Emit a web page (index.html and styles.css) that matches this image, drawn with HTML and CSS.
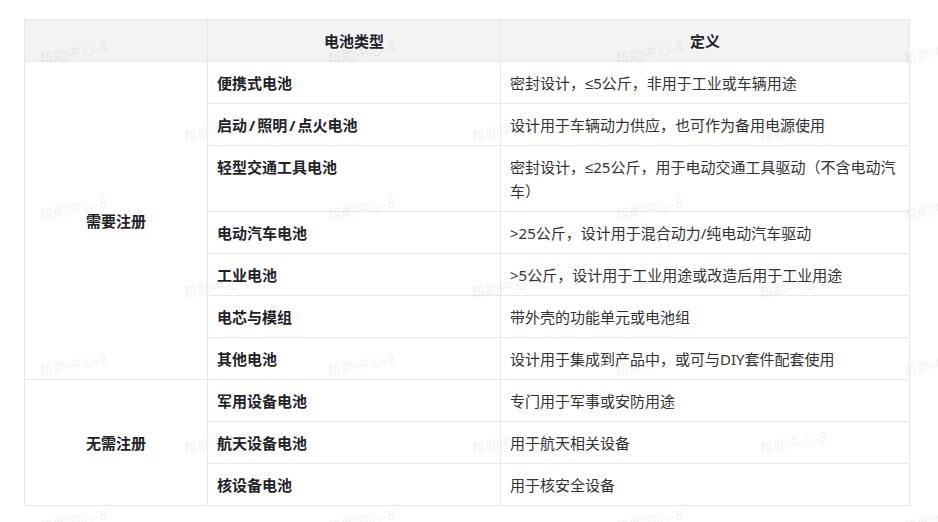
FILE: index.html
```html
<!DOCTYPE html>
<html lang="zh-CN">
<head>
<meta charset="utf-8">
<title>电池类型</title>
<link rel="stylesheet" href="styles.css">
</head>
<body>
<div class="page">
  <table class="battery-table">
    <colgroup>
      <col class="c1"><col class="c2"><col class="c3">
    </colgroup>
    <thead>
      <tr><th></th><th>电池类型</th><th>定义</th></tr>
    </thead>
    <tbody>
      <tr><td class="group" rowspan="7">需要注册</td><td class="type">便携式电池</td><td>密封设计，<span class="sym">≤</span>5公斤，非用于工业或车辆用途</td></tr>
      <tr><td class="type">启动<span class="slash">/</span>照明<span class="slash">/</span>点火电池</td><td>设计用于车辆动力供应，也可作为备用电源使用</td></tr>
      <tr><td class="type">轻型交通工具电池</td><td>密封设计，<span class="sym">≤</span>25公斤，用于电动交通工具驱动（不含电动汽车）</td></tr>
      <tr><td class="type">电动汽车电池</td><td>&gt;25公斤，设计用于混合动力/纯电动汽车驱动</td></tr>
      <tr><td class="type">工业电池</td><td>&gt;5公斤，设计用于工业用途或改造后用于工业用途</td></tr>
      <tr><td class="type">电芯与模组</td><td>带外壳的功能单元或电池组</td></tr>
      <tr><td class="type">其他电池</td><td>设计用于集成到产品中，或可与DIY套件配套使用</td></tr>
      <tr><td class="group" rowspan="3">无需注册</td><td class="type">军用设备电池</td><td>专门用于军事或安防用途</td></tr>
      <tr><td class="type">航天设备电池</td><td>用于航天相关设备</td></tr>
      <tr><td class="type">核设备电池</td><td>用于核安全设备</td></tr>
    </tbody>
  </table>
  <div class="wm-layer wm-a" aria-hidden="true">
    <span>帮助中心-8</span><span>帮助中心-8</span><span>帮助中心-8</span><span>帮助中心-8</span>
    <span>帮助中心-8</span><span>帮助中心-8</span><span>帮助中心-8</span><span>帮助中心-8</span>
    <span>帮助中心-8</span><span>帮助中心-8</span><span>帮助中心-8</span><span>帮助中心-8</span>
    <span>帮助中心-8</span><span>帮助中心-8</span><span>帮助中心-8</span><span>帮助中心-8</span>
  </div>
  <div class="wm-layer wm-b" aria-hidden="true">
    <span>帮助中心-8</span><span>帮助中心-8</span><span>帮助中心-8</span><span>帮助中心-8</span>
    <span>帮助中心-8</span><span>帮助中心-8</span><span>帮助中心-8</span><span>帮助中心-8</span>
    <span>帮助中心-8</span><span>帮助中心-8</span><span>帮助中心-8</span><span>帮助中心-8</span>
  </div>
</div>
</body>
</html>
```

FILE: styles.css
```css
html, body {
  margin: 0;
  padding: 0;
  background: #ffffff;
}

body {
  font-family: "Noto Sans", "Noto Sans CJK SC", sans-serif;
  color: #333333;
}

.page {
  position: relative;
  width: 938px;
  height: 522px;
  overflow: hidden;
  padding: 19px 0 0 24px;
  box-sizing: border-box;
}

.battery-table {
  border-collapse: collapse;
  table-layout: fixed;
  width: 885px;
  font-size: 15px;
  line-height: 24px;
}

.c1 { width: 183px; }
.c2 { width: 293px; }
.c3 { width: 409px; }

.battery-table th,
.battery-table td {
  border: 1px solid #e6e7ea;
  padding: 9px 9px 8px 9px;
  text-align: left;
  vertical-align: top;
}

.battery-table th {
  background: #f2f3f5;
  text-align: center;
  font-weight: 700;
  color: #1f2329;
}

.battery-table td {
  font-weight: 400;
  color: #333333;
}

.battery-table td.type {
  font-weight: 700;
  color: #1f2329;
}

.sym {
  font-family: "Liberation Sans", "DejaVu Sans", sans-serif;
  line-height: 1;
}

.slash {
  padding: 0 2px;
}

.battery-table td.group {
  text-align: center;
  vertical-align: middle;
  font-weight: 700;
  color: #1f2329;
}

.wm-layer {
  position: absolute;
  display: grid;
  grid-template-columns: repeat(4, 288px);
  grid-auto-rows: 156px;
  pointer-events: none;
}

.wm-a {
  left: -71px;
  top: -26px;
}

.wm-b {
  left: 73px;
  top: 52px;
}

.wm-layer span {
  display: flex;
  align-items: center;
  justify-content: center;
  font-family: "Noto Sans CJK SC", sans-serif;
  font-size: 14px;
  color: rgba(0, 0, 0, 0.08);
  transform: rotate(-11deg);
  white-space: nowrap;
}
```
